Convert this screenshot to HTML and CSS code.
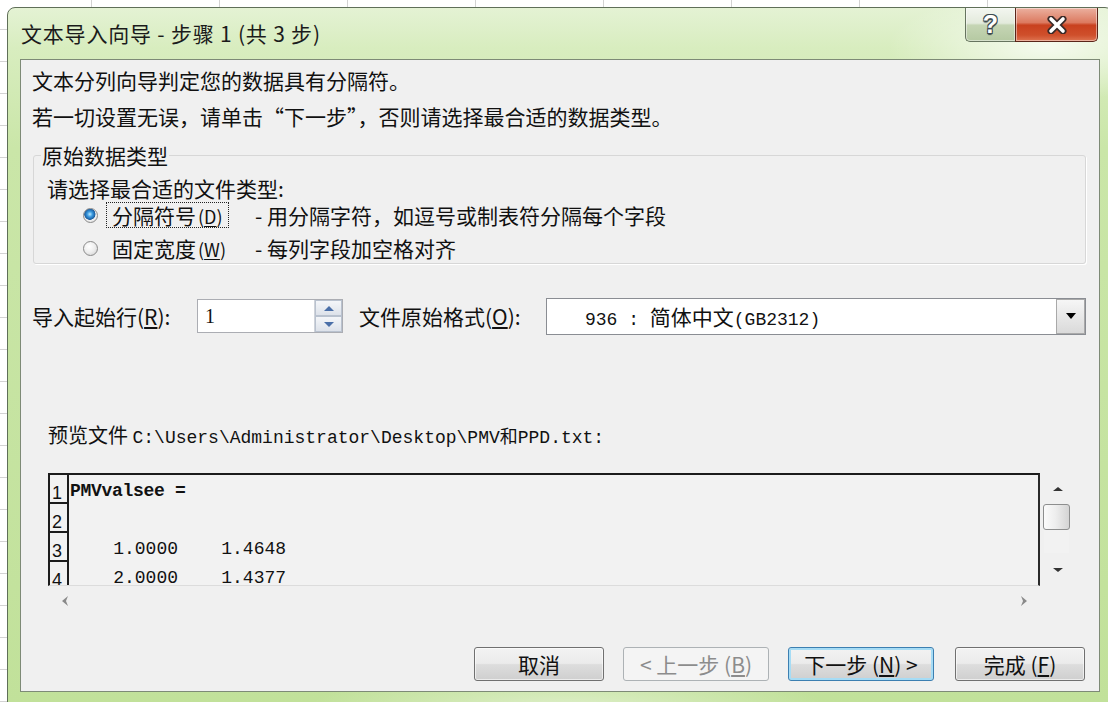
FILE: index.html
```html
<!DOCTYPE html>
<html lang="zh-CN">
<head>
    <meta charset="UTF-8">
    <title>文本导入向导 - 步骤 1 (共 3 步)</title>
    <link rel="stylesheet" href="styles.css">
</head>
<body>
    <div class="wizard">
        <div class="titlebar">
            <div class="title">文本导入向导 - 步骤 1 (共 3 步)</div>
            <div class="caption-btns">
                <div class="cap-btn help">?</div>
                <div class="cap-btn close">
                    <svg width="22" height="18" viewBox="0 0 22 18">
                        <path d="M5 3 L17 15 M17 3 L5 15" stroke="#3a2a28" stroke-width="7" stroke-linecap="round" fill="none"/>
                        <path d="M5 3 L17 15 M17 3 L5 15" stroke="#fff" stroke-width="3.6" stroke-linecap="round" fill="none"/>
                    </svg>
                </div>
            </div>
        </div>

        <div class="content">
            <p class="line">文本分列向导判定您的数据具有分隔符。</p>
            <p class="line">若一切设置无误，请单击“下一步”，否则请选择最合适的数据类型。</p>

            <fieldset class="group">
                <legend>原始数据类型</legend>
                <div class="prompt">请选择最合适的文件类型:</div>
                <div class="radio-row">
                    <span class="radio checked"></span>
                    <span class="radio-label focused">分隔符号<span class="key">(<u>D</u>)</span></span>
                    <span class="radio-desc">- 用分隔字符，如逗号或制表符分隔每个字段</span>
                </div>
                <div class="radio-row second">
                    <span class="radio"></span>
                    <span class="radio-label">固定宽度<span class="key">(<u>W</u>)</span></span>
                    <span class="radio-desc">- 每列字段加空格对齐</span>
                </div>
            </fieldset>

            <div class="import-row">
                <span class="field-label start-label">导入起始行(<u>R</u>):</span>
                <div class="spin">
                    <span class="spin-value">1</span>
                    <div class="spin-btns">
                        <span class="spin-up"></span>
                        <span class="spin-down"></span>
                    </div>
                </div>
                <span class="field-label origin-label">文件原始格式(<u>O</u>):</span>
                <div class="dropdown">
                    <span class="dropdown-value"><span class="mono">936 : </span>简体中文<span class="mono">(GB2312)</span></span>
                    <span class="dropdown-btn"><span class="tri-down"></span></span>
                </div>
            </div>

            <div class="preview-label">预览文件 <span class="mono path">C:\Users\Administrator\Desktop\PMV和PPD.txt:</span></div>

            <div class="preview">
                <div class="preview-main">
                    <div class="grid">
                        <div class="grid-row"><span class="num">1</span><span class="cell first">PMVvalsee =</span></div>
                        <div class="grid-row"><span class="num">2</span><span class="cell"></span></div>
                        <div class="grid-row"><span class="num">3</span><span class="cell">    1.0000    1.4648</span></div>
                        <div class="grid-row"><span class="num">4</span><span class="cell">    2.0000    1.4377</span></div>
                    </div>
                    <div class="vscroll">
                        <div class="arrow-box up"><span class="tri-up"></span></div>
                        <div class="thumb"></div>
                        <div class="track"></div>
                        <div class="arrow-box down"><span class="tri-down small"></span></div>
                    </div>
                </div>
                <div class="hscroll">
                    <svg class="h-arrow" width="8" height="12" viewBox="0 0 8 12"><path d="M7 1 L1 6 L7 11 L5 6 Z" fill="#8a8a8a"/></svg>
                    <svg class="h-arrow" width="8" height="12" viewBox="0 0 8 12"><path d="M1 1 L7 6 L1 11 L3 6 Z" fill="#8a8a8a"/></svg>
                </div>
            </div>

            <div class="buttons">
                <button class="btn cancel">取消</button>
                <button class="btn back" disabled>&lt; 上一步 (<u>B</u>)</button>
                <button class="btn next default">下一步 (<u>N</u>) &gt;</button>
                <button class="btn finish">完成 (<u>F</u>)</button>
            </div>
        </div>
    </div>
</body>
</html>
```

FILE: styles.css
```css
* {
    box-sizing: border-box;
}

body {
    margin: 0;
    width: 1108px;
    height: 702px;
    overflow: hidden;
    font-family: "Noto Sans CJK SC", "Liberation Sans", sans-serif;
    background-color: #fff;
    background-image:
        repeating-linear-gradient(90deg, transparent 0 91px, #d3d3d3 91px 92px, transparent 92px 128px),
        repeating-linear-gradient(180deg, transparent 0 29px, #d3d3d3 29px 30px, transparent 30px 32px);
}

/* window frame */
.wizard {
    margin: 7px 0 0 7px;
    width: 1106px;
    height: 700px;
    padding: 0 12px;
    border: 1px solid #5f6f58;
    border-radius: 8px 8px 0 0;
    background:
        radial-gradient(ellipse 160px 55px at 1040px 38px, rgba(255, 255, 255, 0.75), rgba(255, 255, 255, 0)),
        radial-gradient(ellipse 260px 40px at 560px 700px, rgba(255, 255, 255, 0.45), rgba(255, 255, 255, 0)),
        linear-gradient(180deg, #e4f2d4 0, #d8edbf 40px, #cae6a8 140px, #c1e19a 100%);
}

.titlebar {
    display: flex;
    align-items: flex-start;
    height: 51px;
}

.title {
    margin-top: 10px;
    padding-left: 1px;
    font-size: 21px;
    line-height: 30px;
    color: #1b1b1b;
    letter-spacing: 0.8px;
}

.caption-btns {
    display: flex;
    margin-left: auto;
    margin-right: 2px;
}

.cap-btn {
    height: 34px;
    display: flex;
    align-items: center;
    justify-content: center;
    box-shadow: inset 0 0 0 1px rgba(255, 255, 255, 0.45);
}

.help {
    width: 50px;
    border: 1px solid #66745f;
    border-right: none;
    border-top: none;
    border-radius: 0 0 0 5px;
    background: linear-gradient(180deg, #f3f6f0 0%, #e3eadc 46%, #c5d5b4 52%, #b5c9a2 100%);
    font-family: "Liberation Sans", sans-serif;
    font-weight: bold;
    font-size: 25px;
    color: #fff;
    text-shadow: -1px -1px 0 #3d4a4f, 1px -1px 0 #3d4a4f, -1px 1px 0 #3d4a4f, 1px 1px 0 #3d4a4f, 0 2px 1px #3d4a4f;
}

.close {
    width: 83px;
    border: 1px solid #5a2519;
    border-top: none;
    border-radius: 0 0 5px 0;
    background: linear-gradient(180deg, #ebb09f 0%, #dc7a60 44%, #c9411f 52%, #cf4f2b 82%, #de7451 100%);
}

/* client area */
.content {
    height: 633px;
    padding: 2px 13px 0 11px;
    border: 1px solid #7d8a76;
    background: #f0f0f0;
    color: #111;
}

.line {
    margin: 0;
    font-size: 21px;
    line-height: 36px;
    white-space: nowrap;
}

.group {
    margin: 9px 0 0 1px;
    padding: 0 0 1px 13px;
    min-width: 0;
    border: 1px solid #d7d7d7;
    border-radius: 3px;
    box-shadow: 1px 1px 0 #fff;
}

.group legend {
    margin-left: -6px;
    padding: 0 1px;
    font-size: 21px;
    line-height: 24px;
}

.prompt {
    margin-top: 8px;
    font-size: 21px;
    line-height: 26px;
}

.radio-row {
    display: flex;
    align-items: center;
    height: 28px;
    font-size: 21px;
    white-space: nowrap;
}

.radio-row.second {
    margin-top: 5px;
}

.radio {
    width: 15px;
    height: 15px;
    margin-left: 36px;
    border-radius: 50%;
    border: 1px solid #8a8a8a;
    background: radial-gradient(circle at 40% 35%, #ffffff 0%, #eeeeee 50%, #cccccc 100%);
}

.radio.checked {
    background: radial-gradient(circle at 45% 40%, #bfeaff 0%, #3a9ae0 25%, #1a5c9e 50%, #f2f2f2 56%, #d2d2d2 100%);
}

.radio-label {
    width: 123px;
    height: 26px;
    margin-left: 8px;
    padding-left: 5px;
    border: 1px solid transparent;
    line-height: 24px;
}

.radio-label.focused {
    border: 1px dotted #222;
}

.key {
    margin-left: 2px;
    font-size: 18px;
}

.radio-desc {
    margin-left: 26px;
}

u {
    text-underline-offset: 2px;
}

/* import row */
.import-row {
    display: flex;
    align-items: center;
    height: 36px;
    margin-top: 34px;
    font-size: 21px;
    white-space: nowrap;
}

.start-label {
    width: 165px;
}

.origin-label {
    width: 187px;
    margin-left: 16px;
}

.spin {
    display: flex;
    width: 146px;
    height: 34px;
    border: 1px solid #abadb3;
    background: #fff;
}

.spin-value {
    flex: 1;
    padding-left: 7px;
    font-family: "Liberation Serif", serif;
    font-size: 20px;
    line-height: 32px;
}

.spin-btns {
    display: flex;
    flex-direction: column;
    width: 28px;
    border-left: 1px solid #cfd3da;
}

.spin-btns span {
    flex: 1;
    display: flex;
    align-items: center;
    justify-content: center;
    background: linear-gradient(180deg, #f4f6f9, #dde2ea);
    border: 1px solid #b9c2cf;
}

.spin-up::after {
    content: "";
    border-left: 5px solid transparent;
    border-right: 5px solid transparent;
    border-bottom: 5px solid #4a6fa8;
}

.spin-down::after {
    content: "";
    border-left: 5px solid transparent;
    border-right: 5px solid transparent;
    border-top: 5px solid #4a6fa8;
}

.dropdown {
    flex: 1;
    display: flex;
    height: 37px;
    border: 1px solid #8a8d93;
    background: #fff;
}

.dropdown-value {
    flex: 1;
    padding-left: 38px;
    font-size: 21px;
    line-height: 35px;
}

.mono {
    font-family: "Liberation Mono", "Noto Sans CJK SC", monospace;
    font-size: 18px;
}

.dropdown-btn {
    width: 29px;
    display: flex;
    align-items: center;
    justify-content: center;
    border: 1px solid #a9a9a9;
    background: linear-gradient(180deg, #f6f6f6, #dadada);
}

.tri-down {
    border-left: 5px solid transparent;
    border-right: 5px solid transparent;
    border-top: 6px solid #000;
}

.tri-down.small {
    border-top: 4px solid #333;
}

.tri-up {
    border-left: 5px solid transparent;
    border-right: 5px solid transparent;
    border-bottom: 4px solid #333;
}

/* preview */
.preview-label {
    margin: 88px 0 0 16px;
    font-size: 20px;
    line-height: 26px;
    white-space: nowrap;
}

.preview-label .path {
    font-size: 18px;
}

.preview {
    width: 1027px;
    margin: 22px 0 0 16px;
}

.preview-main {
    display: flex;
    height: 113px;
}

.grid {
    flex: 1;
    overflow: hidden;
    border-top: 2px solid #1c1c1c;
    border-left: 2px solid #1c1c1c;
    border-right: 2px solid #2a2a2a;
    border-bottom: 1px solid #dcdcdc;
    background: #f2f2f2;
}

.grid-row {
    display: flex;
    height: 29px;
}

.num {
    width: 19px;
    flex-shrink: 0;
    border-right: 2px solid #1c1c1c;
    border-bottom: 2px solid #1c1c1c;
    font-family: "Liberation Sans", sans-serif;
    font-size: 18px;
    line-height: 20px;
    padding-top: 8px;
    padding-left: 2px;
    color: #111;
}

.cell {
    padding: 5px 0 0 1px;
    font-family: "Liberation Mono", monospace;
    font-size: 18px;
    line-height: 22px;
    white-space: pre;
    color: #111;
}

.cell.first {
    font-weight: bold;
    letter-spacing: -0.3px;
}

.vscroll {
    width: 35px;
    display: flex;
    flex-direction: column;
}

.arrow-box {
    display: flex;
    align-items: center;
    justify-content: center;
    width: 100%;
}

.arrow-box.up {
    height: 31px;
}

.arrow-box.down {
    height: 33px;
}

.thumb {
    width: 27px;
    height: 26px;
    margin-left: 3px;
    border: 1px solid #8d8e8e;
    border-radius: 3px;
    background: linear-gradient(90deg, #fbfbfb 0%, #eeeeee 45%, #d4d4d4 100%);
}

.track {
    flex: 1;
    width: 25px;
    margin-left: 4px;
    background: #f2f2f2;
}

.hscroll {
    display: flex;
    justify-content: space-between;
    align-items: center;
    width: 992px;
    height: 27px;
    padding: 2px 12px 0 13px;
}

/* buttons */
.buttons {
    display: flex;
    justify-content: flex-end;
    gap: 19px;
    margin: 34px 1px 0 0;
}

.btn {
    height: 34px;
    padding: 0;
    border: 1px solid #707070;
    border-radius: 3px;
    background: linear-gradient(180deg, #f3f3f3 0%, #ebebeb 48%, #dddddd 52%, #cfcfcf 100%);
    box-shadow: inset 0 0 0 1px rgba(255, 255, 255, 0.6);
    font-family: "Noto Sans CJK SC", sans-serif;
    font-size: 21px;
    line-height: 30px;
    color: #111;
    white-space: nowrap;
}

.cancel {
    width: 130px;
}

.back {
    width: 146px;
}

.next {
    width: 146px;
}

.finish {
    width: 130px;
    margin-left: 2px;
}

.btn:disabled {
    border-color: #adb2b5;
    background: #f4f4f4;
    color: #8c8c8c;
    box-shadow: none;
}

.btn.default {
    border-color: #3c7fb1;
    box-shadow: inset 0 0 0 2px #a6dcf5;
}
```
